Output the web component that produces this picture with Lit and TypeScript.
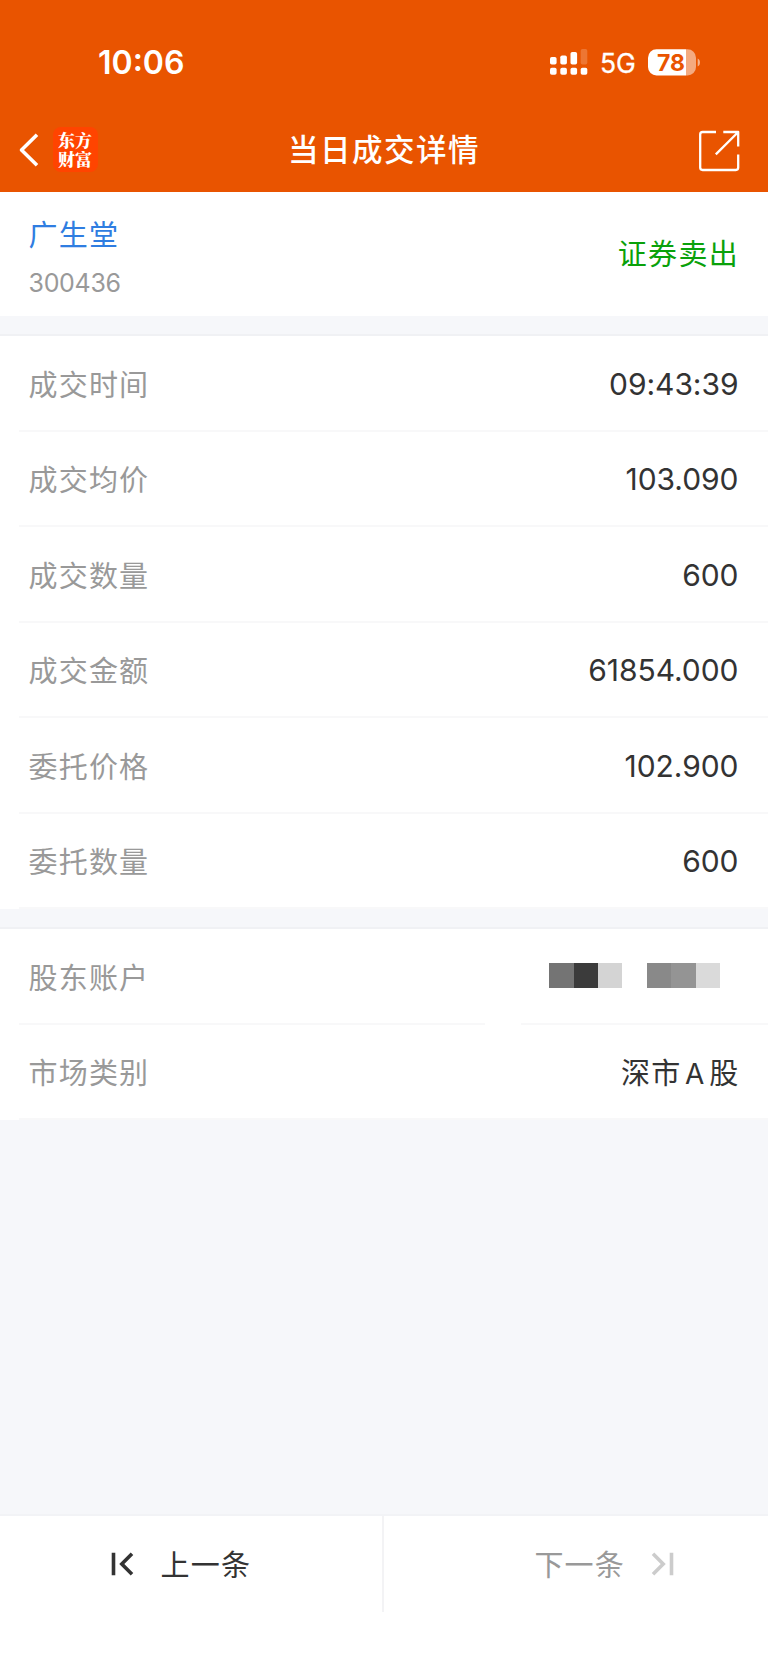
import { LitElement, html, css, svg } from "lit";
import { customElement, property } from "lit/decorators.js";
import { classMap } from "lit/directives/class-map.js";

const trade: [string, string][] = [
  ["成交时间", "09:43:39"],
  ["成交均价", "103.090"],
  ["成交数量", "600"],
  ["成交金额", "61854.000"],
  ["委托价格", "102.900"],
  ["委托数量", "600"],
];

@customElement("status-bar")
class StatusBar extends LitElement {
  static styles = css`
    :host { display: flex; height: 108px; padding: 18px 67px 0 98px; box-sizing: border-box; align-items: center; color: #fff; }
    .time { font-size: 32px; font-weight: 600; letter-spacing: 0; flex: 1; line-height: 40px; }
    .net { font-size: 26.5px; font-weight: 400; margin: 0 13px 0 12px; line-height: 30px; width: 35px; -webkit-text-stroke: 0.3px #fff; }
    .signal { display: block; margin-top: -1px; }
    .battery { display: block; margin-top: -1px; }
    .battery text { font: 700 23px Inter, sans-serif; fill: #e95400; }
  `;
  render() {
    const cols = [[0, 8], [10.3, 6.5], [20.5, 3], [30.7, 0]];
    return html`
      <div class="time">10:06</div>
      <svg class="signal" width="38" height="27" viewBox="0 0 38 27">
        ${cols.map(([x, y], i) => svg`
          <rect x=${x} y=${y} width="6.6" height=${15.6 - y} rx="1.8" fill="#fff" opacity=${i === 3 ? 0.2 : 1}></rect>
          <rect x=${x} y="18.8" width="6.6" height="7" rx="1.8" fill="#fff"></rect>`)}
      </svg>
      <div class="net">5G</div>
      <svg class="battery" width="53" height="27" viewBox="0 0 53 27">
        <defs><clipPath id="c"><rect x="0" y="0.2" width="48" height="26.4" rx="8.5"></rect></clipPath></defs>
        <g clip-path="url(#c)">
          <rect width="38" height="27" fill="#fff"></rect>
          <rect x="38" width="10" height="27" fill="#fff" opacity="0.5"></rect>
        </g>
        <path d="M49.7 9.5c3 1.2 3 6.8 0 8z" fill="#fff" opacity="0.55"></path>
        <text x="9" y="21.6" textLength="28" lengthAdjust="spacingAndGlyphs">78</text>
      </svg>`;
  }
}

@customElement("nav-bar")
class NavBar extends LitElement {
  static styles = css`
    :host { display: grid; grid-template-columns: 1fr auto 1fr; align-items: center; height: 84px; padding: 0 27px 0 18px; box-sizing: border-box; color: #fff; }
    .left { display: flex; align-items: center; gap: 13px; }
    .logo { width: 45px; height: 45px; border-radius: 8px; background: #ff4400; display: flex; align-items: center; justify-content: center; font: 900 17px/19px "Noto Serif CJK SC", "Noto Sans CJK SC", sans-serif; margin-top: -2px; }
    .logo span { width: 35px; word-break: break-all; }
    .title { font-size: 30.5px; font-weight: 500; letter-spacing: 1.5px; line-height: 44px; margin-left: 9px; }
    .share { justify-self: end; display: block; margin-top: 2px; }
  `;
  render() {
    return html`
      <div class="left">
        <svg width="22" height="36" viewBox="0 0 22 36" fill="none" stroke="#fff" stroke-width="3.6" stroke-linejoin="round">
          <path d="M19 2.800 3.500 18 19 33.200"></path>
        </svg>
        <div class="logo"><span>东方财富</span></div>
      </div>
      <div class="title">当日成交详情</div>
      <svg class="share" width="42" height="42" viewBox="0 0 42 42" fill="none" stroke="#fff" stroke-width="2.3" stroke-linejoin="round">
        <path d="M17 2H3.6Q1.2 2 1.2 4.4V37.6Q1.2 40 3.6 40H36.8Q39.2 40 39.2 37.6V24.5"></path>
        <path d="M24.300 2H39.2V16.5M39 2.2 16.800 24.400"></path>
      </svg>`;
  }
}

@customElement("detail-row")
class DetailRow extends LitElement {
  @property() label = "";
  @property({ type: Boolean, reflect: true }) split = false;
  static styles = css`
    :host { display: flex; justify-content: space-between; align-items: center; flex: 1; margin-left: 19px; padding: 2px 29.5px 0 9.500px; border-bottom: 2px solid #f8f8f9; box-sizing: border-box; white-space: nowrap; }
    :host([split]) { border-image: linear-gradient(90deg, #f8f8f9 466px, #fff 466px, #fff 501px, #f8f8f9 501px) 2; }
    .label { color: #999; font-size: 29px; letter-spacing: 1.2px; margin-top: -2px; }
    .value { color: #333; font-size: 30px; letter-spacing: -0.05px; }
  `;
  render() {
    return html`<span class="label">${this.label}</span><span class="value"><slot></slot></span>`;
  }
}

@customElement("pager-bar")
class PagerBar extends LitElement {
  static styles = css`
    :host { display: flex; height: 156px; background: #fff; align-items: flex-start; box-sizing: border-box; }
    .item { height: 96px; display: flex; align-items: center; box-sizing: border-box; font-size: 29px; letter-spacing: 1.2px; color: #333; }
    .item span { margin-top: -3px; }
    .item svg { margin-top: -1px; }
    .prev { flex: 0 0 384px; border-right: 2px solid #f3f3f5; padding-left: 110.500px; gap: 27px; }
    .next { flex: 1; color: #999; justify-content: flex-end; padding-right: 94px; gap: 26px; }
  `;
  render() {
    const glyph = (dir: string) => html`
      <svg width="23" height="24" viewBox="0 0 23 24" fill="none" stroke-width="3.6" stroke=${dir === "prev" ? "#333" : "#ccc"}>
        ${dir === "prev"
          ? svg`<path d="M2.5 .8V23.2M21 1.8 10.8 12 21 22.2"></path>`
          : svg`<path d="M20.5 .8V23.2M2 1.8 12.2 12 2 22.2"></path>`}
      </svg>`;
    return html`
      <div class=${classMap({ item: true, prev: true })}>${glyph("prev")}<span>上一条</span></div>
      <div class=${classMap({ item: true, next: true })}><span>下一条</span>${glyph("next")}</div>`;
  }
}

@customElement("app-root")
class AppRoot extends LitElement {
  static styles = css`
    :host { display: flex; flex-direction: column; width: 768px; height: 1672px; background: #f6f7fa; font-family: Inter, "Noto Sans CJK SC", sans-serif; overflow: hidden; }
    .head { background: #e95400; height: 192px; flex: none; }
    .card { background: #fff; display: flex; flex-direction: column; flex: none; }
    .stock { height: 124px; flex-direction: row; justify-content: space-between; align-items: center; padding: 0 30px 0 28.5px; box-sizing: border-box; }
    .name { color: #2f7de1; font-size: 29px; letter-spacing: 1.2px; line-height: 42px; margin-top: 5px; }
    .code { color: #999; font-size: 25px; letter-spacing: -0.3px; line-height: 32px; margin-top: 10px; }
    .side { color: #0aa10a; font-size: 29px; letter-spacing: 1.3px; margin: -5px -1px 0 0; }
    .gap { height: 20px; flex: none; box-sizing: border-box; border-bottom: 2px solid #f0f1f4; }
    .trade { height: 573px; }
    .account { height: 191px; }
    .mask { display: flex; margin: -2px 18.5px 0 0; }
    .mask i { width: 24.4px; height: 25px; }
    .a { background: #747474; } .b { background: #3b3b3b; } .c { background: #d4d4d4; }
    .d { background: #898989; } .e { background: #949494; } .f { background: #dadada; }
    .market { display: block; font-size: 29px; letter-spacing: 1.3px; margin: -3px -1px 0 0; }
    .latin { font-family: Inter, sans-serif; font-size: 28px; margin: 0 3.5px; }
    .fill { flex: 1; border-bottom: 2px solid #f2f3f6; }
  `;
  render() {
    return html`
      <div class="head"><status-bar></status-bar><nav-bar></nav-bar></div>
      <div class="card stock">
        <div><div class="name">广生堂</div><div class="code">300436</div></div>
        <div class="side">证券卖出</div>
      </div>
      <div class="gap"></div>
      <div class="card trade">
        ${trade.map(([k, v]) => html`<detail-row .label=${k}>${v}</detail-row>`)}
      </div>
      <div class="gap"></div>
      <div class="card account">
        <detail-row label="股东账户" split>
          <div class="mask"><i class="a"></i><i class="b"></i><i class="c"></i><i></i><i class="d"></i><i class="e"></i><i class="f"></i></div>
        </detail-row>
        <detail-row label="市场类别"><span class="market">深市<span class="latin">A</span>股</span></detail-row>
      </div>
      <div class="fill"></div>
      <pager-bar></pager-bar>`;
  }
}
